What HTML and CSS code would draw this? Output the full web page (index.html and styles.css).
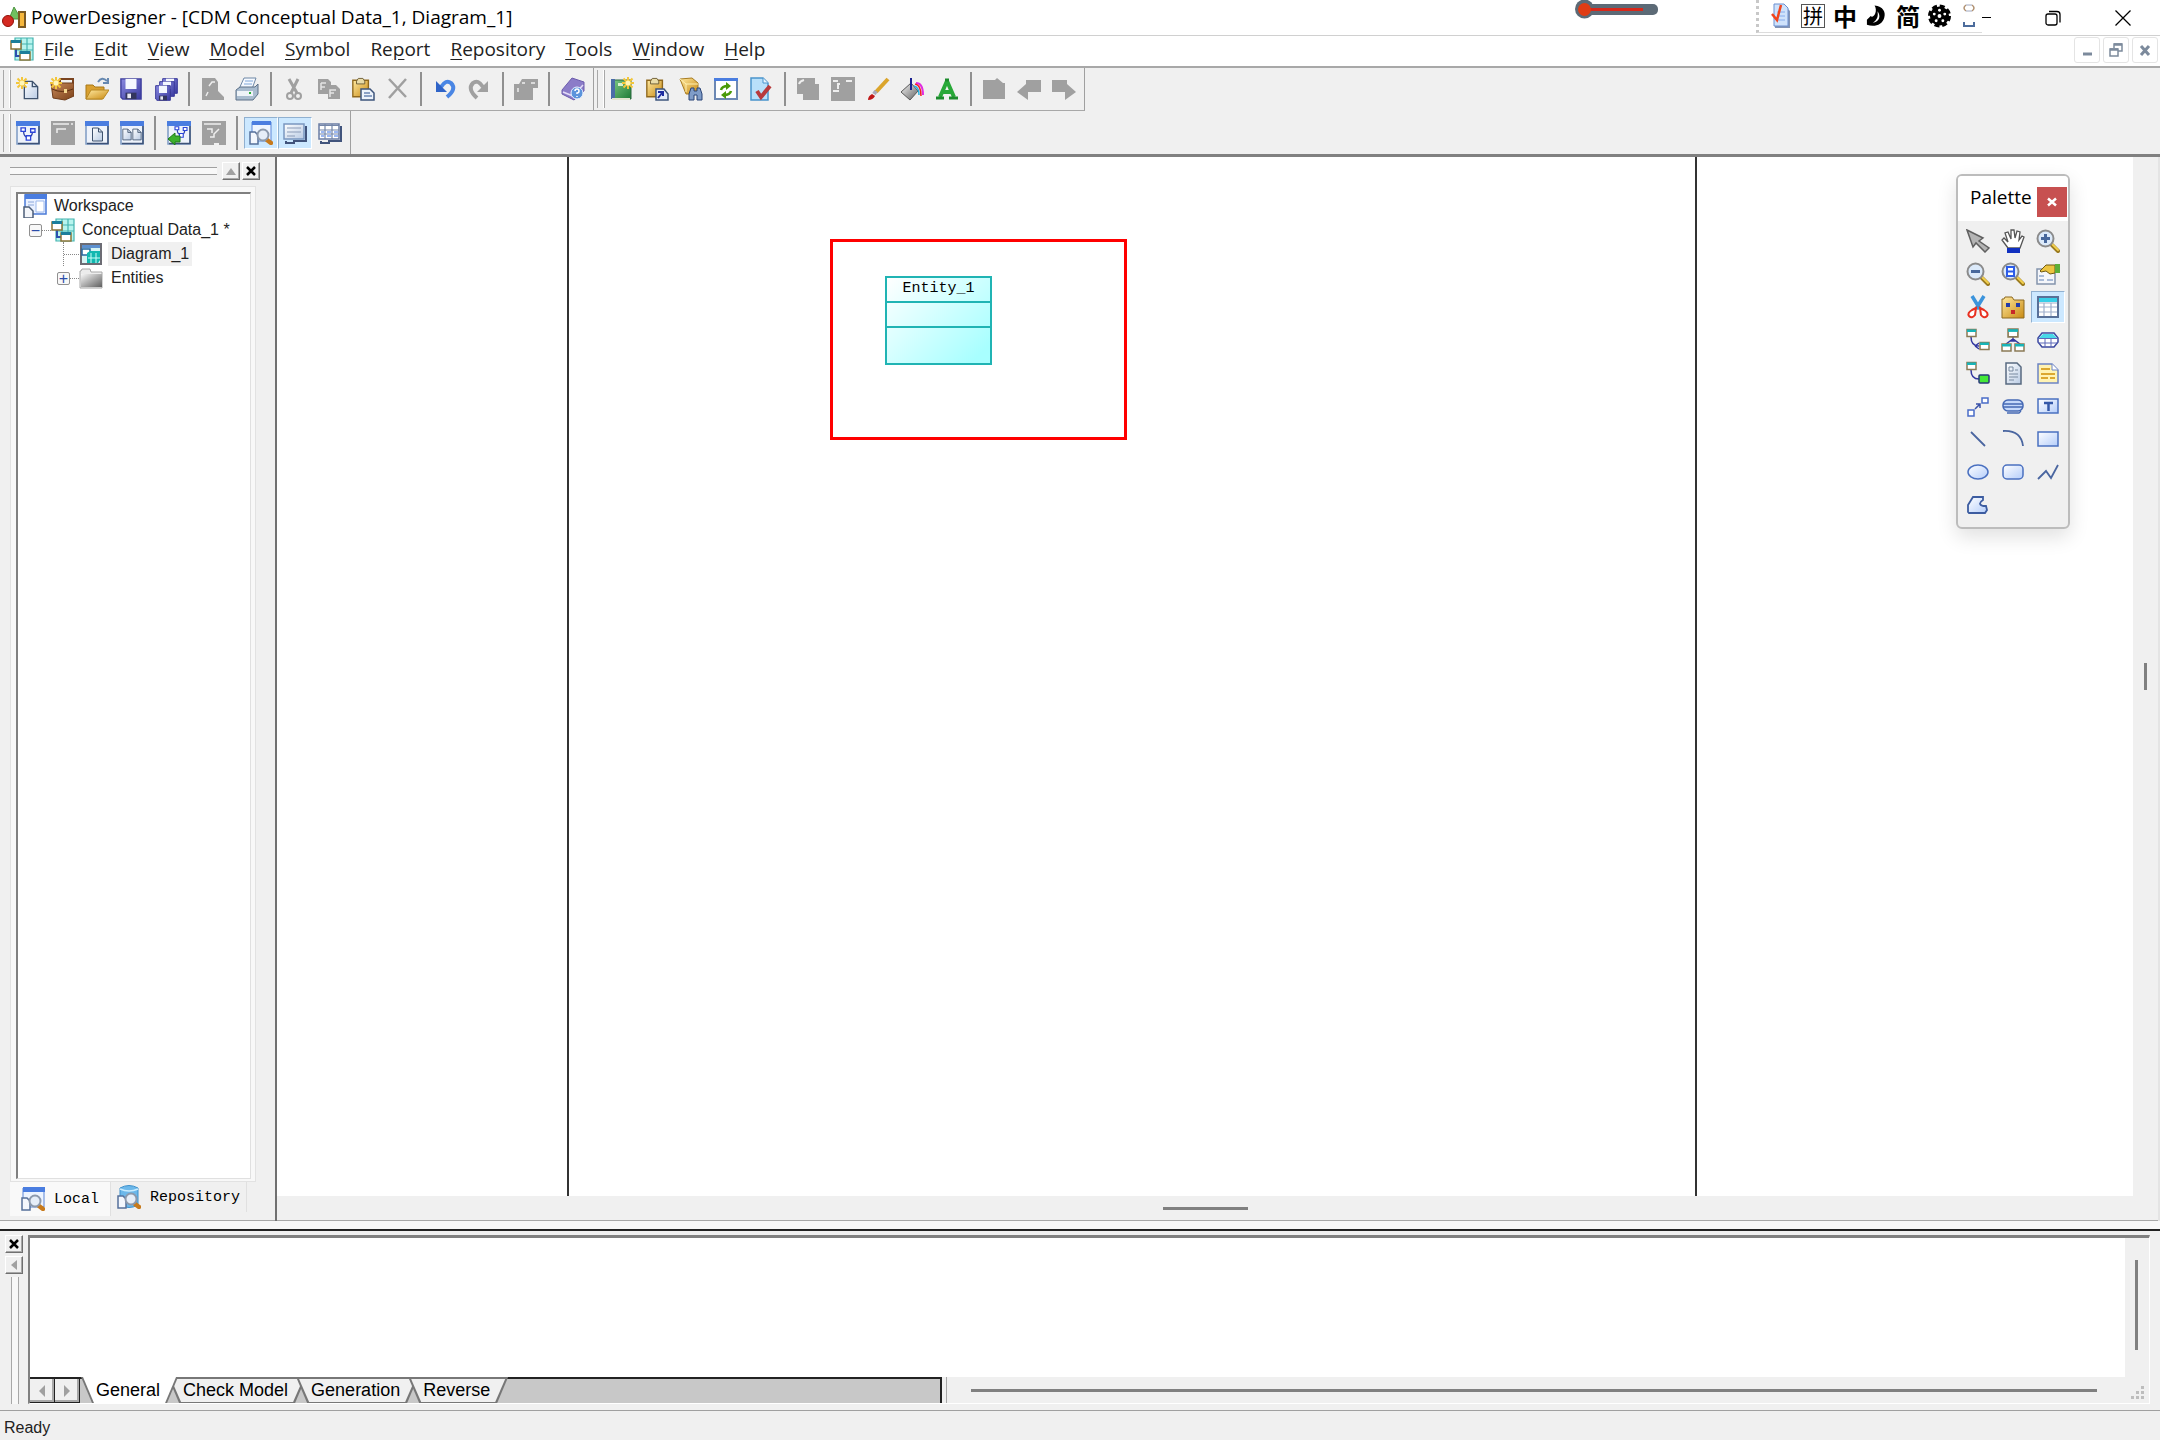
FILE: index.html
```html
<!DOCTYPE html>
<html lang="en">
<head>
<meta charset="utf-8">
<title>PowerDesigner - [CDM Conceptual Data_1, Diagram_1]</title>
<link rel="stylesheet" href="styles.css">
</head>
<body>
<svg class="defs" aria-hidden="true">
  <defs>
    <linearGradient id="gGold" x1="0" y1="0" x2="1" y2="1"><stop offset="0" stop-color="#ffe9a0"/><stop offset="1" stop-color="#c98a12"/></linearGradient>
    <linearGradient id="gBlue" x1="0" y1="0" x2="1" y2="1"><stop offset="0" stop-color="#ffffff"/><stop offset="1" stop-color="#b4cdfa"/></linearGradient>
    <linearGradient id="gPage" x1="0" y1="0" x2="1" y2="1"><stop offset="0" stop-color="#ffffff"/><stop offset="1" stop-color="#b9cbe4"/></linearGradient>
    <linearGradient id="gBrown" x1="0" y1="0" x2="1" y2="1"><stop offset="0" stop-color="#c98a5c"/><stop offset="1" stop-color="#7b4118"/></linearGradient>
    <linearGradient id="gDisk" x1="0" y1="0" x2="1" y2="1"><stop offset="0" stop-color="#8a8ae0"/><stop offset="1" stop-color="#3a3aa0"/></linearGradient>
    <linearGradient id="gGrey" x1="0" y1="0" x2="1" y2="1"><stop offset="0" stop-color="#f8f8f8"/><stop offset="1" stop-color="#606060"/></linearGradient>
    <linearGradient id="gGreen" x1="0" y1="0" x2="1" y2="1"><stop offset="0" stop-color="#7cc884"/><stop offset="1" stop-color="#1f7a34"/></linearGradient>
  </defs>
  <symbol id="star" viewBox="0 0 12 12"><path d="M6 0v12M0 6h12M1.500 1.500l9 9M10.500 1.500l-9 9" stroke="#f3c63a" stroke-width="2"/><circle cx="6" cy="6" r="2.500" fill="#fff6b8"/></symbol>
  <symbol id="win" viewBox="0 0 24 24"><path d="M1 1h22v22H1z" fill="#eef3fb" stroke="#7d9bc4" stroke-width="1.500"/><path d="M0 0h24v5H0z" fill="#4a7de0"/><path d="M2 22.500h21V5" fill="none" stroke="#3d5277" stroke-width="1.500"/></symbol>
  <symbol id="page" viewBox="0 0 12 15"><path d="M1 1h6l4 4v9H1z" fill="url(#gPage)" stroke="#3f536e" stroke-width="1"/><path d="M7 1v4h4" fill="none" stroke="#3f536e"/></symbol>
  <symbol id="flow" viewBox="0 0 18 16"><path d="M4 5q0 6 5 7M14 6q0 4-4 6" fill="none" stroke="#2c3fa8" stroke-width="1.500"/><path d="M1 1h5v4H1zM12 2h5v4h-5zM7 10h5v5H7z" fill="#fff" stroke="#2c45d8" stroke-width="1.500"/></symbol>
  <symbol id="lens" viewBox="0 0 24 24"><path d="M16 16l6 6" stroke="#9a7a20" stroke-width="4" stroke-linecap="round"/><path d="M16 15l6 6" stroke="#f1cf4e" stroke-width="2" stroke-linecap="round"/><circle cx="9.500" cy="9.500" r="8" fill="#dceafa" stroke="#8b8b8b" stroke-width="2"/></symbol>
  <symbol id="glass" viewBox="0 0 24 24"><path d="M1 11h5l3 3v9H1z" fill="#f3f7fd" stroke="#56709a" stroke-width="1.500"/><path d="M18 19l4 3" stroke="#c77a1c" stroke-width="4.500" stroke-linecap="round"/><circle cx="14" cy="14" r="5.500" fill="#e6eef8" stroke="#8c99ac" stroke-width="2"/></symbol>
  <symbol id="ent" viewBox="0 0 11 9"><path d="M1 1h9v7H1z" fill="#fff" stroke="#8a7a55" stroke-width="1.500"/><path d="M1 1h9v2.500H1z" fill="#18b4b8"/></symbol>
  <symbol id="model" viewBox="0 0 24 24"><path d="M5 1h18v22H5z" fill="#b8f4ee"/><path d="M5 1h18v22H5zM11 1v22M17 1v22M5 7h18M5 13h18" fill="none" stroke="#45b4b0" stroke-width="1.200"/><path d="M6 11v8h4" fill="none" stroke="#2d4fae" stroke-width="2"/><path d="M1 4h10v8H1zM10 15h10v8H10z" fill="#fff" stroke="#8a7438" stroke-width="1.500"/><path d="M1 3h10v3H1zM10 14h10v3H10z" fill="#1c7e9c"/></symbol>
  <symbol id="clip" viewBox="0 0 24 24"><path d="M2 3h17v18H2z" fill="url(#gGold)" stroke="#90681c" stroke-width="1.500"/><path d="M6 4l2-3h5l2 3v3H6z" fill="#e9dca8" stroke="#6a5a30"/></symbol>
  <symbol id="disk" viewBox="0 0 24 24"><path d="M1 1h22v22H3l-2-2z" fill="url(#gDisk)" stroke="#3c3c9c" stroke-width="1.500"/><path d="M6 1h12v11H6z" fill="#f5f8ff"/><path d="M6 16h12v7H6z" fill="#33355e"/><path d="M8 17h4v5H8z" fill="#e8e8f4"/></symbol>
</svg>

<div class="app">
  <header class="titlebar">
    <svg class="app-icon" viewBox="0 0 24 22"><path d="M12 0l7 12H7z" fill="#70c060" stroke="#4c9440"/><circle cx="6" cy="14" r="5.500" fill="#d42a22" stroke="#941008"/><path d="M17 5h6v15h-6z" fill="#f6b73c" stroke="#7c5a22" stroke-width="2"/></svg>
    <h1 class="title">PowerDesigner - [CDM Conceptual Data_1, Diagram_1]</h1>
    <svg class="thermo" viewBox="0 0 84 20"><circle cx="9.500" cy="9" r="9.500" fill="#5c6a76"/><rect x="9" y="4" width="74" height="11" rx="5" fill="#5c6a76"/><path d="M12 9.500h56" stroke="#d8281a" stroke-width="3"/><circle cx="9.500" cy="9.500" r="6.500" fill="#e03c14"/></svg>
    <div class="ime">
      <svg class="ime-pen" viewBox="0 0 20 26"><path d="M3 3h11l5 5v17H4z" fill="#8494b4"/><path d="M3 1h10l4 4v18H3z" fill="#cfe2fb" stroke="#6a8fd0"/><path d="M6 9h8M6 13h8M6 17h8" stroke="#86acec"/><path d="M1 11l5 6 4-15" fill="none" stroke="#f2441c" stroke-width="2.500"/></svg>
      <span class="ime-box">拼</span>
      <span class="ime-char">中</span>
      <svg class="ime-ic" viewBox="0 0 24 24"><path d="M10 1c9 1 12 7 10 13-2 7-10 10-18 7v-5l4-4c2 3 8-4 4-11z" fill="#000"/><path d="M13 7c4 5 2 11-5 12 5-3 6-7 5-12z" fill="#fff"/></svg>
      <span class="ime-char">简</span>
      <svg class="ime-ic" viewBox="0 0 24 24"><circle cx="12" cy="12" r="10" fill="#000" stroke="#000" stroke-width="4" stroke-dasharray="5 2.850"/><g fill="#fff"><circle cx="12" cy="12" r="2"/><circle cx="12" cy="6" r="1.500"/><circle cx="17.500" cy="10" r="1.500"/><circle cx="15.500" cy="17" r="1.500"/><circle cx="8.500" cy="17" r="1.500"/><circle cx="6.500" cy="10" r="1.500"/></g></svg>
      <svg class="ime-mark" viewBox="0 0 14 24"><path d="M4 1q-4 3 0 6M10 1q4 3 0 6" fill="none" stroke="#b09070" stroke-width="1.500"/><path d="M4 1h6M4 7h6" stroke="#a0a8c0"/><path d="M2 18v4h10v-4" fill="none" stroke="#4c6c9c" stroke-width="2"/></svg>
    </div>
    <button class="win-btn win-min" aria-label="Minimize"><svg viewBox="0 0 16 16"><path d="M0 7.500h9" stroke="#000"/></svg></button>
    <button class="win-btn" aria-label="Restore"><svg viewBox="0 0 16 16"><rect x="1" y="4" width="11" height="11" rx="2" fill="none" stroke="#000" stroke-width="1.300"/><path d="M4 1.500h8q3 0 3 3v8" fill="none" stroke="#000" stroke-width="1.300"/></svg></button>
    <button class="win-btn" aria-label="Close"><svg viewBox="0 0 16 16"><path d="M.5.5l15 15M15.500.5l-15 15" stroke="#000" stroke-width="1.300"/></svg></button>
  </header>

  <nav class="menubar">
    <svg class="ic" viewBox="0 0 24 24"><use href="#model"/></svg>
    <div class="menus">
      <button><u>F</u>ile</button><button><u>E</u>dit</button><button><u>V</u>iew</button><button><u>M</u>odel</button><button><u>S</u>ymbol</button><button>Re<u>p</u>ort</button><button><u>R</u>epository</button><button><u>T</u>ools</button><button><u>W</u>indow</button><button><u>H</u>elp</button>
    </div>
    <div class="mdi">
      <button aria-label="Minimize diagram"><svg viewBox="0 0 14 14"><path d="M3 11h9" stroke="#7c8a9c" stroke-width="3"/></svg></button>
      <button aria-label="Restore diagram"><svg viewBox="0 0 14 14"><path d="M5 5V1h8v7H9" fill="none" stroke="#7c8a9c" stroke-width="1.500"/><path d="M1 6h8v7H1z" fill="none" stroke="#7c8a9c" stroke-width="1.500"/><path d="M1 6.500h8M5 1.500h8" stroke="#7c8a9c" stroke-width="2.500"/></svg></button>
      <button aria-label="Close diagram"><svg viewBox="0 0 14 14"><path d="M3 3l8 9M11 3l-8 9" stroke="#7c8a9c" stroke-width="3"/></svg></button>
    </div>
  </nav>

  <div class="tool-row">
    <div class="toolbar bar-standard">
      <i class="grip"></i>
      <div class="tools">
        <button aria-label="New"><svg class="ic" viewBox="0 0 24 24"><use href="#page" x="7" y="3" width="16" height="20"/><use href="#star" width="12" height="12"/></svg></button>
        <button aria-label="New project"><svg class="ic" viewBox="0 0 24 24"><path d="M10 5V2h13v5" fill="none" stroke="#7a4420" stroke-width="2"/><path d="M1 6h23v13l-9 4-12-2z" fill="url(#gBrown)" stroke="#6e3c1a"/><path d="M2 12q10 5 21 0" fill="none" stroke="#5e3010"/><path d="M14 12h3v4h-3z" fill="#f4d890"/><use href="#star" width="12" height="12"/></svg></button>
        <button aria-label="Open"><svg class="ic" viewBox="0 0 24 24"><path d="M1 8h7l2 2h9v5L17 22H1z" fill="#d9a030" stroke="#a87818"/><path d="M6 13h18l-6 9H1z" fill="url(#gGold)" stroke="#b88822"/><path d="M13 5q4-6 9-1M23 1v5h-5" fill="none" stroke="#6688b0" stroke-width="2"/></svg></button>
        <button aria-label="Save"><svg class="ic" viewBox="0 0 24 24"><use href="#disk" x="1" y="1" width="22" height="22"/></svg></button>
        <button aria-label="Save all"><svg class="ic" viewBox="0 0 24 24"><use href="#disk" x="8" y="1" width="16" height="16"/><use href="#disk" x="5" y="4" width="16" height="16"/><use href="#disk" x="1" y="8" width="16" height="16"/></svg></button>
        <i class="sep"></i>
        <button aria-label="Print preview" disabled><svg class="ic" viewBox="0 0 24 24"><path d="M1 1h13l3 4v9l6 6v3H1z" fill="#a0a0a0"/><path d="M5 19l2-4M8 9l3-4h3" fill="none" stroke="#eee" stroke-width="1.500"/></svg></button>
        <button aria-label="Print"><svg class="ic" viewBox="0 0 24 24"><path d="M9 1h12l-4 11H4z" fill="#f5f9ff" stroke="#6e88a6"/><path d="M10 4h8M9 7h8" stroke="#7fa6d8"/><path d="M1 13l4-3h15l3-3v10l-5 6H1z" fill="#a9bccf" stroke="#5c7088"/><path d="M2 14h16v5H2z" fill="#eef3f8"/><path d="M14 16h2" stroke="#28b038" stroke-width="2"/></svg></button>
        <i class="sep"></i>
        <button aria-label="Cut" disabled><svg class="ic" viewBox="0 0 24 24"><path d="M7 2l8 14M16 2L9 16" stroke="#a0a0a0" stroke-width="3"/><circle cx="8" cy="19" r="3" fill="none" stroke="#a0a0a0" stroke-width="2"/><circle cx="16" cy="19" r="3" fill="none" stroke="#a0a0a0" stroke-width="2"/></svg></button>
        <button aria-label="Copy" disabled><svg class="ic" viewBox="0 0 24 24"><path d="M1 2h10l3 3v3h5l4 4v10H11v-5H1z" fill="#a0a0a0"/><path d="M4 6h5M4 6v7M4 10h4M13 20v-7h6M13 16h4" fill="none" stroke="#e4e4e4" stroke-width="1.500"/></svg></button>
        <button aria-label="Paste"><svg class="ic" viewBox="0 0 24 24"><use href="#clip" width="22" height="23"/><path d="M10 12h9l4 4v7H10z" fill="#edf3fb" stroke="#3e557c" stroke-width="1.500"/><path d="M13 16h6M13 19h8" stroke="#6b86b4" stroke-width="1.500"/></svg></button>
        <button aria-label="Delete" disabled><svg class="ic" viewBox="0 0 24 24"><path d="M3 2l17 18M20 2L3 21" stroke="#a0a0a0" stroke-width="2.500"/></svg></button>
        <i class="sep"></i>
        <button aria-label="Undo"><svg class="ic" viewBox="0 0 24 24"><path d="M8 10q5-8 10-4 6 6-4 14" fill="none" stroke="#4a86e4" stroke-width="4"/><path d="M3 4v11h11z" fill="#2f64c8"/></svg></button>
        <button aria-label="Redo" disabled><svg class="ic" viewBox="0 0 24 24"><path d="M16 10q-5-8-10-4-6 6 4 15" fill="none" stroke="#a0a0a0" stroke-width="4"/><path d="M21 4v11H10z" fill="#a0a0a0"/></svg></button>
        <i class="sep"></i>
        <button aria-label="Properties" disabled><svg class="ic" viewBox="0 0 24 24"><path d="M0 7h5l3-5h16v9h-5v12H0z" fill="#a0a0a0"/><path d="M4 11v4M8 6h3M17 6h4" stroke="#eee" stroke-width="1.500"/></svg></button>
        <i class="sep"></i>
        <button aria-label="Help"><svg class="ic" viewBox="0 0 24 24"><path d="M1 13L11 1l12 4v9l-10 9L1 17z" fill="#8b7cc8" stroke="#6c5cac"/><path d="M2 15l10 4L22 8" fill="none" stroke="#e4dcf8" stroke-width="1.500"/><circle cx="16" cy="16" r="6" fill="#5b94dc" stroke="#eaf2ff"/><path d="M14 14q0-2 2-2t2 2-2 2v1M16 19v1" fill="none" stroke="#fff" stroke-width="1.500"/></svg></button>
      </div>
    </div>
    <div class="toolbar bar-model">
      <i class="grip"></i>
      <div class="tools">
        <button aria-label="New model"><svg class="ic" viewBox="0 0 24 24"><path d="M3 3h18v19H3z" fill="url(#gGreen)" stroke="#2a6840"/><path d="M1 2h4v20H1z" fill="#4a6ca8"/><path d="M2 22h18" stroke="#e4e4d0" stroke-width="2"/><path d="M8 6h5v3H8z" fill="#d8f0d0"/><use href="#star" x="12" width="12" height="12"/></svg></button>
        <button aria-label="Paste as shortcut"><svg class="ic" viewBox="0 0 24 24"><use href="#clip" width="22" height="23"/><path d="M11 12h8l4 5v6H11z" fill="#e4ecfa" stroke="#3e557c" stroke-width="1.500"/><path d="M13 21l4-5M13 15h5v4" fill="none" stroke="#1c2ca0" stroke-width="2"/></svg></button>
        <button aria-label="Find objects"><svg class="ic" viewBox="0 0 24 24"><path d="M1 2l12-1 6 5v11H7z" fill="url(#gGold)" stroke="#a87c20"/><path d="M1 2l6 5h12M7 7v8" fill="none" stroke="#fff0b0"/><path d="M10 23v-6l2-6h3v3h3v-3h3l2 6v6h-5v-5h-3v5z" fill="#7f9cc8" stroke="#2a4478"/></svg></button>
        <button aria-label="Refresh"><svg class="ic" viewBox="0 0 24 24"><path d="M1 2h22v20H1z" fill="#fff" stroke="#6c88b4" stroke-width="2"/><path d="M0 1h24v3H0z" fill="#4a7de0"/><path d="M7 13q1-4 7-4M17 14q-1 4-7 4" fill="none" stroke="#4a9a08" stroke-width="2.500"/><path d="M12 5l5 4-5 4zM12 14l-5 4 5 4z" fill="#4a9a08"/></svg></button>
        <button aria-label="Check model"><svg class="ic" viewBox="0 0 24 24"><path d="M2 1h12l5 5v17H2z" fill="#b8e0fa" stroke="#4a94cc" stroke-width="1.500"/><path d="M14 1v5h5" fill="#e8f6ff" stroke="#4a94cc"/><path d="M8 14l4 6L21 9" fill="none" stroke="#b83a3c" stroke-width="4"/></svg></button>
        <i class="sep"></i>
        <button aria-label="Group" disabled><svg class="ic" viewBox="0 0 24 24"><path d="M1 1h18v6h4v16H7v-6H1z" fill="#a0a0a0"/><path d="M3 7q1-3 5-4" fill="none" stroke="#eee" stroke-width="2"/></svg></button>
        <button aria-label="Ungroup" disabled><svg class="ic" viewBox="0 0 24 24"><path d="M0 0h24v24H0z" fill="#a0a0a0"/><path d="M2 4h5M15 4h6M9 7H7v5M2 14h6" fill="none" stroke="#eee" stroke-width="2"/></svg></button>
        <button aria-label="Line style"><svg class="ic" viewBox="0 0 24 24"><path d="M22 2L10 15" stroke="#dba52c" stroke-width="4"/><path d="M10 14l-2 3" stroke="#a8a8b8" stroke-width="4"/><path d="M6 17l3 2q-2 4-7 4 0-4 4-6z" fill="#c01818"/></svg></button>
        <button aria-label="Fill"><svg class="ic" viewBox="0 0 24 24"><path d="M11 6l7 8-8 9-9-8z" fill="url(#gGrey)" stroke="#585858"/><path d="M11 1v12" stroke="#1a2090" stroke-width="2"/><path d="M16 6q7 0 7 12" fill="none" stroke="#e02ce0" stroke-width="2"/><path d="M15 7q6 1 6 12" fill="none" stroke="#f02020" stroke-width="1.500"/><path d="M14 9q5 1 5 9" fill="none" stroke="#20b0e0" stroke-width="1.500"/></svg></button>
        <button aria-label="Font"><svg class="ic" viewBox="0 0 24 24"><path d="M12 4L5 20M12 4l7 16M8 15h9" fill="none" stroke="#28a838" stroke-width="4"/><path d="M1 21h8M14 21h9M10 3h4" stroke="#1c8c2c" stroke-width="3"/></svg></button>
        <i class="sep"></i>
        <button aria-label="Parent" disabled><svg class="ic" viewBox="0 0 24 24"><path d="M1 3h12l2-2 6 5h2v16H1z" fill="#a0a0a0"/></svg></button>
        <button aria-label="Back" disabled><svg class="ic" viewBox="0 0 24 24"><path d="M0 15l9-8v-4h15v12H11v8z" fill="#a0a0a0"/></svg></button>
        <button aria-label="Forward" disabled><svg class="ic" viewBox="0 0 24 24"><path d="M24 15l-9-8v-4H0v12h13v8z" fill="#a0a0a0"/></svg></button>
      </div>
    </div>
  </div>

  <div class="tool-row tool-row-last">
    <div class="toolbar bar-view">
      <i class="grip"></i>
      <div class="tools">
        <button aria-label="Diagram"><svg class="ic" viewBox="0 0 24 24"><use href="#win" width="24" height="24"/><use href="#flow" x="4" y="6" width="16" height="14"/></svg></button>
        <button aria-label="Previous diagram" disabled><svg class="ic" viewBox="0 0 24 24"><path d="M0 0h24v24H0z" fill="#a0a0a0"/><path d="M2 3h16M6 12V8h9M20 3h2" fill="none" stroke="#eee" stroke-width="1.500"/></svg></button>
        <button aria-label="One page"><svg class="ic" viewBox="0 0 24 24"><use href="#win" width="24" height="24"/><use href="#page" x="6" y="6" width="13" height="15"/></svg></button>
        <button aria-label="All pages"><svg class="ic" viewBox="0 0 24 24"><use href="#win" width="24" height="24"/><use href="#page" x="2" y="7" width="10" height="13"/><use href="#page" x="12" y="7" width="10" height="13"/></svg></button>
        <i class="sep"></i>
        <button aria-label="Import diagram"><svg class="ic" viewBox="0 0 24 24"><use href="#win" width="24" height="24"/><use href="#flow" x="6" y="5" width="16" height="12"/><path d="M1 18l7-6v3h5v6H8v3z" fill="#3cb02c" stroke="#1c7818"/></svg></button>
        <button aria-label="Next diagram" disabled><svg class="ic" viewBox="0 0 24 24"><path d="M0 0h24v24h-7v-2h-5v2H0z" fill="#a0a0a0"/><path d="M2 3h17M5 8h5v4M17 8l-5 5v3H8" fill="none" stroke="#eee" stroke-width="1.500"/></svg></button>
        <i class="sep"></i>
        <button class="on" aria-label="Browser" aria-pressed="true"><svg class="ic" viewBox="0 0 24 24"><path d="M3 1h19v19H3z" fill="#edf4ff" stroke="#5a86d8"/><path d="M3 0h19v4H3z" fill="#4a7de0"/><use href="#glass" width="24" height="24"/></svg></button>
        <button class="on" aria-label="Output" aria-pressed="true"><svg class="ic" viewBox="0 0 24 24"><path d="M3 20v2h8v-2h12V5" fill="none" stroke="#41547c" stroke-width="2"/><path d="M1 3h20v15H1z" fill="url(#gPage)" stroke="#7a96c0" stroke-width="1.500"/><path d="M4 7h14M4 11h14M4 15h8" stroke="#8c9cb8" stroke-width="1.200"/></svg></button>
        <button aria-label="Result list"><svg class="ic" viewBox="0 0 24 24"><path d="M3 20v2h8v-2h12V5" fill="none" stroke="#41547c" stroke-width="2"/><path d="M1 3h20v15H1z" fill="#fff" stroke="#6a7ca4" stroke-width="1.500"/><path d="M1 4.500h20M1 9h20M1 13h20M7 3v15M14 3v15" stroke="#7486a8" stroke-width="1.200"/><path d="M3 11h3M9 11h4M16 11h4M3 15h3M9 15h4M16 15h4" stroke="#7aa0f0" stroke-width="1.500"/></svg></button>
      </div>
    </div>
  </div>

  <main class="main">
    <aside class="browser">
      <div class="dock-head">
        <i class="dock-grip"></i>
        <button class="dock-btn" aria-label="Collapse"><svg viewBox="0 0 14 14"><path d="M7 4l5 7H2z" fill="#a0a0a0"/></svg></button>
        <button class="dock-btn" aria-label="Close browser"><svg viewBox="0 0 14 14"><path d="M3 3l8 8M11 3l-8 8" stroke="#000" stroke-width="2.500"/></svg></button>
      </div>
      <div class="tree-frame">
        <ul class="tree">
          <li><div class="node"><svg class="ic" viewBox="0 0 24 24"><path d="M2 1h21v19H2z" fill="#eaf1ff" stroke="#4a7ad8" stroke-width="1.500"/><path d="M2 0h22v5H2z" fill="#4a7de0"/><path d="M13 7h8v11h-8z" fill="#fff" stroke="#9cb8ec"/><path d="M5 8h6M5 11h6" stroke="#8ca8dc"/><path d="M1 13h5l4 4v7H1z" fill="#f4f6fa" stroke="#4c5e78" stroke-width="1.500"/></svg><span class="label">Workspace</span></div>
            <ul class="level-1">
              <li><div class="node"><i class="box">−</i><i class="dots"></i><svg class="ic" viewBox="0 0 24 24"><use href="#model"/></svg><span class="label">Conceptual Data_1 *</span></div>
                <ul class="level-2">
                  <li><div class="node"><i class="dots dots-long"></i><svg class="ic" viewBox="0 0 24 24"><path d="M2 2h20v20H2z" fill="#d6f4f4" stroke="#6c6c74" stroke-width="2"/><path d="M3 3h18v3H3z" fill="#5c90d0"/><path d="M3 7h8v6H3z" fill="#fff" stroke="#2868a0" stroke-width="1.500"/><path d="M8 11l3-2h10v9l-2 3H8z" fill="#12b8b0"/><path d="M12 11v10M17 11v10M9 16h12" stroke="#c8fff8"/></svg><span class="label selected">Diagram_1</span></div></li>
                  <li class="last"><div class="node"><i class="box">+</i><i class="dots"></i><svg class="ic" viewBox="0 0 24 24"><path d="M1 5h1l1-2h8l1 3h11v16H1z" fill="#ececec" stroke="#a8a8a8"/><path d="M2 8h21v13H2z" fill="url(#gGrey)"/></svg><span class="label">Entities</span></div></li>
                </ul>
              </li>
            </ul>
          </li>
        </ul>
      </div>
      <div class="side-tabs">
        <button class="side-tab active"><svg class="ic" viewBox="0 0 24 24"><path d="M2 1h21v19H2z" fill="#edf4ff" stroke="#5a86d8"/><path d="M2 0h22v5H2z" fill="#4a7de0"/><use href="#glass" width="24" height="24"/></svg><span>Local</span></button>
        <button class="side-tab"><svg class="ic" viewBox="0 0 24 24"><path d="M3 3q9-5 18 0v17q-9 5-18 0z" fill="#6cb8ea" stroke="#3c90cc"/><path d="M3 4q9 4 18 0" fill="none" stroke="#c8ecff" stroke-width="1.500"/><use href="#glass" width="24" height="24"/></svg><span>Repository</span></button>
      </div>
    </aside>

    <section class="workspace">
      <div class="canvas">
        <i class="page-line page-left"></i>
        <i class="page-line page-right"></i>
        <div class="highlight"></div>
        <div class="entity">
          <div class="entity-name">Entity_1</div>
          <div class="entity-ids"></div>
          <div class="entity-attrs"></div>
        </div>
      </div>
      <div class="vscroll"><i class="vthumb"></i></div>
      <div class="hscroll"><i class="hthumb"></i></div>
    </section>

    <section class="palette">
      <header><h2>Palette</h2><button class="palette-close" aria-label="Close palette"><svg viewBox="0 0 12 12"><path d="M2 2.500l8 7M10 2.500l-8 7" stroke="#fff" stroke-width="2.500"/></svg></button></header>
      <div class="palette-grid">
        <button aria-label="Pointer"><svg class="ic" viewBox="0 0 24 24"><path d="M1 1l16 8-4 3 10 7-4 4-9-9-3 4z" fill="#b4b4b4" stroke="#606060" stroke-width="1.500"/></svg></button>
        <button aria-label="Grabber"><svg class="ic" viewBox="0 0 24 24"><path d="M7 19l-6-8 2-2 4 4-3-9 3-1 3 7V1h3l1 8 2-7 3 1-1 8 3-4 2 1-4 11z" fill="#fff" stroke="#555" stroke-width="1.300"/><path d="M6 19h13v5H6z" fill="#1030c0"/></svg></button>
        <button aria-label="Zoom in"><svg class="ic" viewBox="0 0 24 24"><use href="#lens"/><path d="M5 9.500h9M9.500 5v9" stroke="#48689c" stroke-width="3"/></svg></button>
        <button aria-label="Zoom out"><svg class="ic" viewBox="0 0 24 24"><use href="#lens"/><path d="M5 9.500h9" stroke="#48689c" stroke-width="3"/></svg></button>
        <button aria-label="Open diagram"><svg class="ic" viewBox="0 0 24 24"><use href="#lens"/><path d="M6 5h7v9H6zM6 9.500h7" fill="#fff" stroke="#2c5ce8" stroke-width="2"/></svg></button>
        <button aria-label="Properties"><svg class="ic" viewBox="0 0 24 24"><path d="M1 7h18v15H1z" fill="#f4f6fa" stroke="#8494ac" stroke-width="1.500"/><path d="M3 14h5M3 18h5M11 18h6" stroke="#90a8cc" stroke-width="1.500"/><path d="M4 9l6-6h9v8l-5 1-4-3-5 1z" fill="#ecc440" stroke="#6e5a14"/><path d="M19 2h5v9h-5z" fill="#5cae38"/></svg></button>
        <button aria-label="Delete"><svg class="ic" viewBox="0 0 24 24"><path d="M6 1l8 13M18 1l-8 13" stroke="#3c94dc" stroke-width="3.500"/><path d="M10 13l-4 2q-5 3-3 6 3 3 6-1zM14 13l4 2q5 3 3 6-3 3-6-1z" fill="#fff" stroke="#e83020" stroke-width="2"/></svg></button>
        <button aria-label="Package"><svg class="ic" viewBox="0 0 24 24"><path d="M1 4h2l1-2h7l2 3h10v18H1z" fill="url(#gGold)" stroke="#8c6820"/><path d="M5 8h4v4H5zM15 8h4v4h-4z" fill="#243ca8"/><path d="M10 15h4v4h-4z" fill="#c82828"/></svg></button>
        <button class="on" aria-label="Entity" aria-pressed="true"><svg class="ic" viewBox="0 0 24 24"><path d="M2 2h20v20H2z" fill="#fff" stroke="#587098" stroke-width="2"/><path d="M3 3h18v4H3z" fill="#38cfe8"/><path d="M3 8h18M3 12h18M3 17h18M8 8v13M15 8v13" stroke="#a0b0cc" stroke-width="1.200"/></svg></button>
        <button aria-label="Relationship"><svg class="ic" viewBox="0 0 24 24"><path d="M5 9q0 9 8 9M9 18l4-3M9 18l4 3" fill="none" stroke="#3438a0" stroke-width="1.500"/><use href="#ent" width="11" height="10"/><use href="#ent" x="13" y="13" width="11" height="10"/></svg></button>
        <button aria-label="Inheritance"><svg class="ic" viewBox="0 0 24 24"><path d="M12 9v4M5 16l7-5 7 5M9 13h6" fill="none" stroke="#3438a0" stroke-width="1.500"/><use href="#ent" x="6" width="12" height="10"/><use href="#ent" y="15" width="11" height="9"/><use href="#ent" x="13" y="15" width="11" height="9"/></svg></button>
        <button aria-label="Association"><svg class="ic" viewBox="0 0 24 24"><path d="M6 5h12l4 5v4l-4 5H6l-4-5v-4z" fill="#fff" stroke="#3c48a0" stroke-width="1.500"/><path d="M7 6h10l4 4H3z" fill="#48d8e8"/><path d="M2 10.500h20M2 15h20M9 10v9M15 10v9" stroke="#5c68b8"/></svg></button>
        <button aria-label="Association link"><svg class="ic" viewBox="0 0 24 24"><path d="M5 9q0 9 8 9" fill="none" stroke="#3438a0" stroke-width="1.500"/><use href="#ent" width="11" height="10"/><rect x="13" y="14" width="10" height="8" rx="1" fill="#44e838" stroke="#283878" stroke-width="1.500"/></svg></button>
        <button aria-label="File"><svg class="ic" viewBox="0 0 24 24"><path d="M5 2h11l4 4v17H5z" fill="url(#gPage)" stroke="#586a80" stroke-width="1.500"/><path d="M8 6h4v4H8zM14 9h3M8 13h9M8 16h9M8 19h5" fill="none" stroke="#788aa0"/></svg></button>
        <button aria-label="Note"><svg class="ic" viewBox="0 0 24 24"><path d="M2 3h14l6 6v13H2z" fill="#fff3b4" stroke="#6c84c4" stroke-width="1.500"/><path d="M16 3v6h6" fill="#fff" stroke="#6c84c4"/><path d="M5 8h9M5 13h14M5 17h7M14 17h5" stroke="#dca830" stroke-width="2"/></svg></button>
        <button aria-label="Link"><svg class="ic" viewBox="0 0 24 24"><path d="M9 15l5-5M10 10h4v4" fill="none" stroke="#3850a8" stroke-width="1.500"/><path d="M2 16h6v6H2zM16 4h6v5h-6z" fill="#fff" stroke="#4a6cc8" stroke-width="1.500"/></svg></button>
        <button aria-label="Title"><svg class="ic" viewBox="0 0 24 24"><rect x="2" y="6" width="20" height="11" rx="5" fill="#c4d8fa" stroke="#4468b4" stroke-width="1.500"/><path d="M2 10h20M2 13h20M6 19h12l2-2" fill="none" stroke="#4468b4" stroke-width="1.300"/></svg></button>
        <button aria-label="Text"><svg class="ic" viewBox="0 0 24 24"><path d="M2 5h20v14H2z" fill="url(#gBlue)" stroke="#4a70c0" stroke-width="1.500"/><path d="M8 9h9M12.500 9v8" stroke="#3458a8" stroke-width="2.500"/></svg></button>
        <button aria-label="Line"><svg class="ic" viewBox="0 0 24 24"><path d="M5 5l14 14" stroke="#4a66a0" stroke-width="1.800"/></svg></button>
        <button aria-label="Arc"><svg class="ic" viewBox="0 0 24 24"><path d="M2 4q18-1 20 15" fill="none" stroke="#4a66a0" stroke-width="1.800"/></svg></button>
        <button aria-label="Rectangle"><svg class="ic" viewBox="0 0 24 24"><path d="M2 5h20v14H2z" fill="url(#gBlue)" stroke="#4a70c0" stroke-width="1.500"/></svg></button>
        <button aria-label="Ellipse"><svg class="ic" viewBox="0 0 24 24"><ellipse cx="12" cy="12" rx="10" ry="7" fill="url(#gBlue)" stroke="#4a70c0" stroke-width="1.500"/></svg></button>
        <button aria-label="Rounded rectangle"><svg class="ic" viewBox="0 0 24 24"><rect x="2" y="5" width="20" height="14" rx="4" fill="url(#gBlue)" stroke="#4a70c0" stroke-width="1.500"/></svg></button>
        <button aria-label="Polyline"><svg class="ic" viewBox="0 0 24 24"><path d="M2 19l8-8 5 7 7-13" fill="none" stroke="#4a66a0" stroke-width="1.800"/></svg></button>
        <button aria-label="Polygon"><svg class="ic" viewBox="0 0 24 24"><path d="M2 19v-7l5-8h10v3q-6 4 0 6h3l1 4-2 3H3z" fill="url(#gBlue)" stroke="#3c5ca0" stroke-width="1.800"/></svg></button>
      </div>
    </section>
  </main>

  <section class="output">
    <div class="output-dock">
      <button class="dock-btn" aria-label="Close output"><svg viewBox="0 0 14 14"><path d="M3 3l8 8M11 3l-8 8" stroke="#000" stroke-width="2.500"/></svg></button>
      <button class="dock-btn" aria-label="Collapse output"><svg viewBox="0 0 14 14"><path d="M4 7l6-5v10z" fill="#a0a0a0"/></svg></button>
      <i class="dock-grip-v"></i>
    </div>
    <div class="output-frame">
      <div class="output-text"></div>
      <div class="output-v"><i></i></div>
      <div class="output-foot">
        <div class="tab-strip">
          <button class="arrow" aria-label="Scroll tabs left"><svg viewBox="0 0 14 14"><path d="M4 7l6-6v12z" fill="#a0a0a0"/></svg></button>
          <button class="arrow" aria-label="Scroll tabs right"><svg viewBox="0 0 14 14"><path d="M10 7L4 1v12z" fill="#a0a0a0"/></svg></button>
          <button class="tab active">General</button><button class="tab">Check Model</button><button class="tab">Generation</button><button class="tab">Reverse</button>
        </div>
        <div class="output-h"><i></i></div>
        <svg class="resize" viewBox="0 0 14 14"><path d="M10 0h3v3h-3zM5 5h3v3H5zM10 5h3v3h-3zM0 10h3v3H0zM5 10h3v3H5zM10 10h3v3h-3z" fill="#bdbdbd"/></svg>
      </div>
    </div>
  </section>

  <footer class="status">Ready</footer>
</div>
</body>
</html>
```
FILE: styles.css
```css
* { box-sizing: border-box; }

body {
  margin: 0;
  background: #f0f0f0;
  color: #000;
  font-family: "Liberation Sans", Arial, sans-serif;
  font-size: 16px;
}

button {
  margin: 0;
  padding: 0;
  border: 0;
  background: none;
  color: inherit;
  font: inherit;
}

svg { display: block; }
i { font-style: normal; }
ul { margin: 0; padding: 0; list-style: none; }
.defs { position: absolute; width: 0; height: 0; }
.ic { width: 24px; height: 24px; flex: none; }

.app {
  display: flex;
  flex-direction: column;
  min-height: 100vh;
}

/* Title bar */
.titlebar {
  display: flex;
  align-items: center;
  height: 36px;
  padding: 0 2px;
  border-bottom: 1px solid #d0d0d0;
  background: #fff;
}
.app-icon { width: 24px; height: 22px; }
.title {
  flex: 1;
  margin: 0 0 2px 5px;
  font: 400 19px/24px "Open Sans", "Noto Sans", sans-serif;
}
.thermo { width: 84px; height: 20px; align-self: flex-start; margin-right: 97px; }
.ime {
  display: flex;
  align-items: center;
  gap: 8px;
  height: 33px;
  align-self: flex-start;
  padding: 0 6px 0 12px;
  border-left: 3px dotted #c8c8c8;
  border-bottom: 1px solid #dcdcdc;
  font-family: "Noto Sans CJK SC", sans-serif;
}
.ime-pen { width: 20px; height: 26px; margin-right: 2px; }
.ime-box {
  width: 24px;
  height: 24px;
  border: 1px solid #555;
  font-size: 20px;
  line-height: 22px;
  text-align: center;
}
.ime-char { width: 24px; font-size: 24px; line-height: 28px; font-weight: 700; }
.ime-ic { width: 23px; height: 24px; }
.ime-mark { width: 14px; height: 24px; margin-left: 3px; }
.win-btn { display: grid; place-items: center; width: 70px; height: 34px; }
.win-btn svg { width: 16px; height: 16px; }
.win-min { width: 36px; justify-items: start; }

/* Menu bar */
.menubar {
  display: flex;
  align-items: flex-start;
  height: 32px;
  padding: 1px 2px 0 10px;
  border-bottom: 2px solid #a8a8a8;
  background: #fff;
}
.menus {
  display: flex;
  flex: 1;
  gap: 20px;
  margin-left: 10px;
  font: 400 19px/24px "Open Sans", "Noto Sans", sans-serif;
}
.menus button { color: #222; }
.menus u { text-underline-offset: 3px; }
.mdi { display: flex; gap: 3px; }
.mdi button {
  display: grid;
  place-items: center;
  width: 26px;
  height: 26px;
  border: 1px solid #e4e4e4;
  border-radius: 3px;
}
.mdi svg { width: 14px; height: 14px; }

/* Toolbars */
.tool-row { display: flex; height: 43px; }
.tool-row-last { height: 46px; border-bottom: 3px solid #808080; }
.toolbar {
  display: flex;
  align-items: center;
  padding: 0 3px;
  border-right: 1px solid #a0a0a0;
  border-bottom: 1px solid #a8a8a8;
}
.tool-row-last .toolbar { border-bottom: 0; }
.bar-standard { width: 594px; }
.bar-model { width: 491px; }
.bar-view { width: 351px; }
.grip {
  width: 8px;
  height: 38px;
  border: solid #a8a8a8;
  border-width: 0 1px;
  background: linear-gradient(90deg, #f0f0f0 5px, #fff 5px);
}
.tools { display: flex; flex: 1; justify-content: space-between; align-items: center; }
.tools button { display: grid; place-items: center; width: 34px; height: 32px; }
.sep { width: 2px; height: 34px; margin: 0 5px; border-left: 2px solid #909090; }
.tools .on, .palette-grid .on {
  border: 1px solid;
  border-color: #90b0d0 #fff #fff #90b0d0;
  background: #cce8ff;
}

/* Model browser */
.main { position: relative; display: flex; flex: 1; }
.browser {
  display: flex;
  flex-direction: column;
  width: 275px;
  padding: 5px 15px 5px 10px;
}
.dock-head { display: flex; align-items: center; gap: 2px; height: 18px; }
.dock-grip {
  flex: 1;
  height: 8px;
  margin-right: 3px;
  border: solid #a0a0a0;
  border-width: 1px 0;
  background: #f8f8f8;
}
.dock-btn {
  display: grid;
  place-items: center;
  width: 18px;
  height: 18px;
  border: 1px solid;
  border-color: #fff #707070 #707070 #fff;
  box-shadow: inset -1px -1px #a8a8a8;
}
.dock-btn svg { width: 14px; height: 14px; }
.tree-frame {
  flex: 1;
  margin: 6px 4px 0 0;
  padding: 5px 4px 2px 5px;
  border: 1px solid #e2e2e2;
  background: #f8f8f8;
}
.tree {
  height: 100%;
  border: 1px solid #e0e0e0;
  border-top: 2px solid #808080;
  border-left: 2px solid #808080;
  background: #fff;
  padding-left: 5px;
}
.node { display: flex; align-items: center; height: 24px; }
.label { margin-left: 4px; padding: 0 3px; line-height: 24px; color: #222; }
.selected { background: #f0f0f0; }
.level-1 { padding-left: 6px; }
.level-2 { margin-left: 34px; }
.level-2 li { border-left: 1px dotted #888; }
.level-2 .last { border-left-color: transparent; }
.level-2 .node { margin-left: -7px; }
.level-2 .label { margin-left: 5px; }
.box {
  width: 13px;
  height: 13px;
  border: 1px solid #909090;
  border-radius: 2px;
  background: #f8f8f8;
  color: #2c4ca8;
  font-size: 16px;
  line-height: 11px;
  text-align: center;
}
.dots { width: 9px; border-top: 1px dotted #888; }
.dots-long { width: 15px; margin-left: 7px; }
.side-tabs { display: flex; align-items: flex-start; margin-right: -6px; height: 34px; font-family: "Liberation Mono", monospace; font-size: 15px; }
.side-tab { display: flex; align-items: center; gap: 9px; height: 30px; padding: 0 6px; border-right: 1px solid #e0e0e0; }
.side-tab.active { height: 34px; padding: 0 11px; background: #f9f9f9; }

/* Diagram */
.workspace {
  display: grid;
  flex: 1;
  grid-template: 1fr 25px / 1fr 25px;
  border-left: 2px solid #707070;
  border-right: 2px solid #e4e4e4;
}
.canvas { position: relative; overflow: hidden; background: #fff; }
.page-line { position: absolute; top: 0; bottom: 0; width: 0; border-left: 2px solid #333; }
.page-left { left: 290px; }
.page-right { left: 1418px; }
.highlight {
  position: absolute;
  left: 553px;
  top: 82px;
  width: 297px;
  height: 201px;
  border: 3px solid #f00;
}
.entity {
  position: absolute;
  left: 608px;
  top: 119px;
  width: 107px;
  height: 89px;
  display: grid;
  grid-template-rows: 25px 25px 1fr;
  border: 2px solid #20b4b4;
  background: linear-gradient(135deg, #fff, #a8ffff 90%);
  font: 15px/22px "Liberation Mono", monospace;
  text-align: center;
}
.entity-name, .entity-ids { border-bottom: 2px solid #20b4b4; }
.vscroll, .hscroll { display: grid; place-items: center; }
.vthumb { width: 3px; height: 27px; background: #808080; }
.hthumb { width: 85px; height: 3px; background: #808080; }

/* Floating palette */
.palette {
  position: absolute;
  top: 17px;
  right: 90px;
  width: 114px;
  height: 355px;
  border: 2px solid #bcbcbc;
  border-radius: 6px;
  background: #f0f0f0;
  box-shadow: 0 8px 20px rgba(0, 0, 0, .12);
  overflow: hidden;
}
.palette header {
  display: flex;
  justify-content: space-between;
  align-items: flex-start;
  height: 45px;
  padding: 11px 1px 0 12px;
  background: #fff;
}
.palette h2 { margin: 0; font: 400 19px/20px "Open Sans", "Noto Sans", sans-serif; }
.palette-close { display: grid; place-items: center; width: 30px; height: 30px; background: #c75050; color: #fff; }
.palette-close svg { width: 12px; height: 12px; }
.palette-grid { display: grid; grid-template-columns: repeat(3, 35px); grid-auto-rows: 33px; padding: 4px 3px; }
.palette-grid button { display: grid; place-items: center; width: 34px; height: 32px; }

/* Output */
.output {
  display: flex;
  gap: 5px;
  height: 182px;
  margin-top: 8px;
  padding: 4px 10px 6px 5px;
  border-top: 2px solid #222;
  border-bottom: 1px solid #a0a0a0;
  box-shadow: 0 -8px #f8f8f8, 0 -9px #a8a8a8;
}
.output-dock { display: flex; flex-direction: column; gap: 3px; width: 18px; }
.dock-grip-v {
  flex: 1;
  width: 8px;
  margin-left: 6px;
  border: solid #a8a8a8;
  border-width: 0 1px;
  background: #f8f8f8;
}
.output-frame {
  display: grid;
  flex: 1;
  grid-template: 1fr 26px / 1fr 24px;
  border: 1px solid #fff;
  border-top: 3px solid #808080;
  border-left: 2px solid #808080;
}
.output-text { background: #fff; }
.output-v { padding: 22px 0 0 10px; }
.output-v i { display: block; width: 3px; height: 90px; background: #808080; }
.output-foot { display: flex; grid-column: 1 / -1; align-items: center; }
.tab-strip {
  display: flex;
  width: 912px;
  height: 26px;
  border-top: 2px solid #222;
  border-right: 2px solid #222;
  background: #c8c8c8;
}
.arrow {
  display: grid;
  place-items: center;
  width: 25px;
  border: solid #222;
  border-width: 0 1px 1px 0;
  background: #f0f0f0;
  box-shadow: inset -2px -2px #a8a8a8;
}
.arrow svg { width: 14px; height: 14px; }
.tab {
  position: relative;
  z-index: 0;
  height: 26px;
  margin: -2px -10px 0 0;
  padding: 0 18px 0 15px;
  background: #777;
  font-size: 18px;
  line-height: 26px;
  clip-path: polygon(0 0, 100% 0, calc(100% - 11px) 100%, 11px 100%);
}
.tab::before {
  content: "";
  position: absolute;
  inset: 0;
  z-index: -1;
  background: #f0f0f0;
  clip-path: polygon(3px 2px, calc(100% - 3px) 2px, calc(100% - 13px) calc(100% - 1px), 13px calc(100% - 1px));
}
.tab.active { z-index: 1; }
.arrow + .tab { margin-left: 1px; }
.tab.active::before {
  background: #fff;
  clip-path: polygon(2px 0, calc(100% - 2px) 0, calc(100% - 13px) 100%, 13px 100%);
}
.output-h {
  display: grid;
  flex: 1;
  align-items: center;
  height: 26px;
  margin-left: 4px;
  padding: 0 26px 0 24px;
  border-left: 1px solid #a8a8a8;
}
.output-h i { height: 3px; background: #808080; }
.resize { width: 14px; height: 14px; margin: 6px 4px 0 8px; }

.status { padding: 7px 4px 2px; line-height: 20px; color: #222; }
```
